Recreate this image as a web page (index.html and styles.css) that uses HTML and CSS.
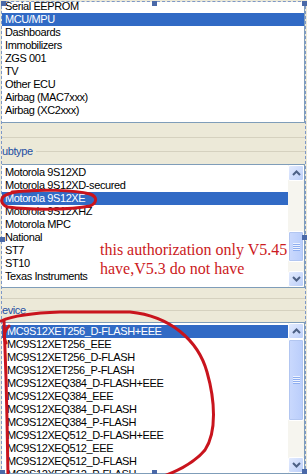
FILE: index.html
```html
<!DOCTYPE html>
<html lang="en">
<head>
  <meta charset="UTF-8" />
  <title>Authorization – MCU/MPU</title>
  <link rel="stylesheet" href="styles.css">
</head>
<body>

<div class="stage">
  <div class="form">

    <div class="list list-category">
      <ul class="rows">
        <li>Serial EEPROM</li>
        <li class="sel">MCU/MPU</li>
        <li>Dashboards</li>
        <li>Immobilizers</li>
        <li>ZGS 001</li>
        <li>TV</li>
        <li>Other ECU</li>
        <li>Airbag (MAC7xxx)</li>
        <li>Airbag (XC2xxx)</li>
      </ul>
    </div>

    <div class="band band-subtype">
      <div class="rule"></div>
      <div class="legend"><span>ubtype</span></div>
    </div>

    <div class="list list-subtype">
      <ul class="rows">
        <li>Motorola 9S12XD</li>
        <li>Motorola 9S12XD-secured</li>
        <li class="sel">Motorola 9S12XE</li>
        <li>Motorola 9S12XHZ</li>
        <li>Motorola MPC</li>
        <li>National</li>
        <li>ST7</li>
        <li>ST10</li>
        <li>Texas Instruments</li>
      </ul>
      <div class="scrollbar">
        <div class="sb-btn"><svg viewBox="0 0 9 6" width="9" height="6"><path d="M1 5 L4.5 1.5 L8 5" /></svg></div>
        <div class="sb-track" style="flex: 51"></div>
        <div class="sb-thumb" style="flex: 30"><i></i><i></i><i></i><i></i></div>
        <div class="sb-track" style="flex: 9"></div>
        <div class="sb-btn"><svg viewBox="0 0 9 6" width="9" height="6"><path d="M1 1 L4.5 4.5 L8 1" /></svg></div>
      </div>
    </div>

    <div class="band band-device">
      <div class="rule"></div>
      <div class="legend"><span>evice</span></div>
    </div>

    <div class="list list-device">
      <ul class="rows">
        <li class="sel">MC9S12XET256_D-FLASH+EEE</li>
        <li>MC9S12XET256_EEE</li>
        <li>MC9S12XET256_D-FLASH</li>
        <li>MC9S12XET256_P-FLASH</li>
        <li>MC9S12XEQ384_D-FLASH+EEE</li>
        <li>MC9S12XEQ384_EEE</li>
        <li>MC9S12XEQ384_D-FLASH</li>
        <li>MC9S12XEQ384_P-FLASH</li>
        <li>MC9S12XEQ512_D-FLASH+EEE</li>
        <li>MC9S12XEQ512_EEE</li>
        <li>MC9S12XEQ512_D-FLASH</li>
        <li>MC9S12XEQ512_P-FLASH</li>
      </ul>
      <div class="scrollbar">
        <div class="sb-btn"><svg viewBox="0 0 9 6" width="9" height="6"><path d="M1 5 L4.5 1.5 L8 5" /></svg></div>
        <div class="sb-thumb" style="flex: 81"><i></i><i></i><i></i><i></i></div>
        <div class="sb-track" style="flex: 37"></div>
        <div class="sb-btn"><svg viewBox="0 0 9 6" width="9" height="6"><path d="M1 1 L4.5 4.5 L8 1" /></svg></div>
      </div>
    </div>

  </div>

  <!-- designer selection handles -->
  <span class="handle h-tl"></span>
  <span class="handle h-tm"></span>
  <span class="handle h-tr"></span>
  <span class="handle h-ml"></span>
  <span class="handle h-mr"></span>
  <span class="handle h-bl"></span>
  <span class="handle h-bm"></span>
  <span class="handle h-br"></span>

  <!-- hand-drawn marks -->
  <svg class="marks" viewBox="0 0 307 474" width="307" height="474">
    <path d="M12 192 C40 189 75 190 90 194 C98 197 97 203 90 206 C70 210 30 210 8 207 C1 205 0 199 4 196 C10 192 20 191 30 191" />
    <path d="M1 321 C10 317 30 313 60 312 L130 312 C170 316 198 340 207 372 C215 400 217 432 205 450 C195 462 180 470 164 476" />
    <path d="M4 321 L6 378 L7 420 L8 476" />
    <path d="M9 326 C4 331 3 337 6 343" />
  </svg>

  <p class="note">this authorization only V5.45<br>have,V5.3 do not have</p>
</div>

</body>
</html>
```

FILE: styles.css
```css
* {
  box-sizing: border-box;
}

html, body {
  margin: 0;
  padding: 0;
  background: #ece9d8;
  overflow: hidden;
}

body {
  font-family: "Liberation Sans", Arial, sans-serif;
  font-size: 11px;
  letter-spacing: -0.4px;
  color: #000;
}

.stage {
  position: relative;
  width: 307px;
  height: 474px;
  overflow: hidden;
}

.form {
  width: 305px;
  height: 473px;
  margin: 1px 1px 0 1px;
  border: 1px dashed #7e98c8;
  border-bottom: none;
  background: #ece9d8;
  overflow: hidden;
}

/* list boxes */
.list {
  display: flex;
  background: #fff;
  border-right: 1px solid #7f9db9;
  overflow: hidden;
}

.list-category {
  height: 121px;
  border-bottom: 1px solid #7f9db9;
}

.list-subtype {
  height: 124px;
  border-top: 1px solid #7f9db9;
  border-bottom: 1px solid #7f9db9;
}

.list-device {
  height: 152px;
  border-top: 1px solid #7f9db9;
  border-bottom: 1px solid #7f9db9;
}

.rows {
  flex: 1;
  list-style: none;
  margin: 0;
  padding: 1px 0 0;
  overflow: hidden;
}

.list-category .rows {
  margin-top: -2px;
  padding-top: 0;
}

.list-device .rows {
  padding-top: 2px;
}

.rows li {
  height: 13px;
  line-height: 13px;
  padding-left: 3px;
  white-space: nowrap;
}

.list-device .rows li {
  padding-left: 5px;
}

.rows li.sel {
  background: #316ac5;
  color: #fff;
}

/* gaps between the lists */
.band {
  padding: 14px 0 6px;
}

.band-device {
  padding: 10px 0 5px;
}

.rule {
  border-top: 1px solid #d5d1bf;
}

.legend {
  display: flex;
  align-items: center;
  height: 13px;
  margin-top: 7px;
  color: #1f4fa3;
  line-height: 13px;
}

.band-device .legend {
  margin-top: 5px;
}

.legend::after {
  content: "";
  flex: 1;
  margin-left: 3px;
  border-top: 1px solid #d5d1bf;
}

/* XP scrollbar */
.scrollbar {
  width: 16px;
  display: flex;
  flex-direction: column;
  background: #f6f5ef;
}

.sb-btn {
  height: 16px;
  flex: none;
  display: flex;
  align-items: center;
  justify-content: center;
  background: linear-gradient(135deg, #e3ebfe, #bccff9);
  border: 1px solid #fff;
  border-radius: 2px;
}

.sb-btn path {
  fill: none;
  stroke: #4d6185;
  stroke-width: 2;
}

.sb-track {
  min-height: 0;
}

.sb-thumb {
  display: flex;
  flex-direction: column;
  align-items: center;
  justify-content: center;
  gap: 1px;
  background: linear-gradient(90deg, #cad9fd, #b9cdfb);
  border: 1px solid #fff;
  border-radius: 2px;
  box-shadow: inset 0 0 0 1px #b2c6f1;
}

.sb-thumb i {
  display: block;
  width: 7px;
  height: 1px;
  background: #eef3fe;
  box-shadow: 0 1px 0 #8eaef0;
}

/* selection handles */
.handle {
  position: absolute;
  width: 5px;
  height: 5px;
  background: #4a69a8;
}

.h-tl { left: 1px; top: 1px; }
.h-tm { left: 152px; top: 1px; }
.h-tr { left: 302px; top: 1px; }
.h-ml { left: 0; top: 237px; }
.h-mr { left: 302px; top: 235px; }
.h-bl { left: 0; top: 470px; }
.h-bm { left: 152px; top: 470px; }
.h-br { left: 302px; top: 469px; }

/* red annotation */
.marks {
  position: absolute;
  top: 0;
  left: 0;
  pointer-events: none;
}

.marks path {
  fill: none;
  stroke: #c9141d;
  stroke-width: 3;
  stroke-linecap: round;
  stroke-linejoin: round;
}

.note {
  position: absolute;
  left: 100px;
  top: 240px;
  margin: 0;
  font-family: "Liberation Serif", "Times New Roman", serif;
  font-size: 16px;
  letter-spacing: 0;
  line-height: 19px;
  color: #cc1a22;
}
```
